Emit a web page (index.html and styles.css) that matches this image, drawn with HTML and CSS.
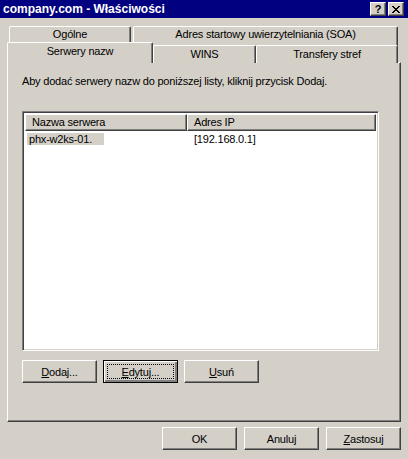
FILE: index.html
```html
<!DOCTYPE html>
<html lang="pl">
<head>
    <meta charset="UTF-8">
    <title>company.com - Właściwości</title>
    <link rel="stylesheet" href="styles.css">
</head>
<body>
<div class="window">

    <!-- Title bar -->
    <div class="titlebar">
        <span class="title">company.com - Właściwości</span>
        <div class="caption-buttons">
            <span class="cap-btn">?</span>
            <span class="cap-btn cap-close">
                <svg width="8" height="7" viewBox="0 0 8 7"><path d="M0 0h2v1h1v1h2v-1h1v-1h2v1h-1v1h-1v1h-1v1h1v1h1v1h1v1h-2v-1h-1v-1h-2v1h-1v1h-2v-1h1v-1h1v-1h1v-1h-1v-1h-1v-1h-1z" fill="#000"/></svg>
            </span>
        </div>
    </div>

    <!-- Tabs -->
    <div class="tabs">
        <div class="tab-row back">
            <div class="tab t-general">Ogólne</div>
            <div class="tab t-soa">Adres startowy uwierzytelniania (SOA)</div>
        </div>
        <div class="tab-row front">
            <div class="tab t-ns selected">Serwery nazw</div>
            <div class="tab t-wins">WINS</div>
            <div class="tab t-zone">Transfery stref</div>
        </div>
    </div>

    <!-- Tab page -->
    <div class="panel">
        <p class="hint">Aby dodać serwery nazw do poniższej listy, kliknij przycisk Dodaj.</p>

        <div class="listview">
            <div class="lv-header">
                <div class="lv-col c-name">Nazwa serwera</div>
                <div class="lv-col c-ip">Adres IP</div>
            </div>
            <div class="lv-row">
                <div class="lv-cell c-name"><span class="sel">phx-w2ks-01.</span></div>
                <div class="lv-cell c-ip">[192.168.0.1]</div>
            </div>
        </div>

        <div class="panel-buttons">
            <button class="btn"><u>D</u>odaj...</button>
            <button class="btn focused"><span class="focus-rect"><u>E</u>dytuj...</span></button>
            <button class="btn"><u>U</u>suń</button>
        </div>
    </div>

    <!-- Dialog buttons -->
    <div class="footer">
        <button class="btn">OK</button>
        <button class="btn">Anuluj</button>
        <button class="btn"><u>Z</u>astosuj</button>
    </div>

</div>
</body>
</html>
```

FILE: styles.css
```css
* {
    box-sizing: border-box;
}
body {
    margin: 0;
    background-color: #d4d0c8;
    font-family: "Liberation Sans", Arial, sans-serif;
    font-size: 11px;
    letter-spacing: -0.2px;
    color: #000;
}
.window {
    width: 408px;
    height: 459px;
    background-color: #d4d0c8;
    overflow: hidden;
}

/* title bar */
.titlebar {
    height: 18px;
    background-color: #000080;
    display: flex;
    align-items: center;
    justify-content: space-between;
    padding: 0 4px 0 3px;
}
.title {
    color: #fff;
    font-weight: bold;
    font-size: 12px;
    letter-spacing: 0;
}
.caption-buttons {
    display: flex;
    gap: 2px;
}
.cap-btn {
    width: 16px;
    height: 14px;
    background-color: #d4d0c8;
    border: 1px solid;
    border-color: #fff #404040 #404040 #fff;
    box-shadow: inset -1px -1px #808080;
    display: flex;
    align-items: center;
    justify-content: center;
    font-weight: bold;
    font-size: 11px;
    line-height: 1;
}

/* tabs */
.tabs {
    padding: 8px 0 0 7px;
}
.tab-row {
    display: flex;
}
.tab-row.back {
    padding-left: 2px;
    height: 17px;
    gap: 2px;
}
.tab-row.front {
    height: 20px;
    margin-top: -1px;
}
.tab {
    background-color: #d4d0c8;
    border-top: 1px solid #fff;
    border-left: 1px solid #fff;
    border-right: 1px solid #404040;
    box-shadow: inset -1px 0 #808080;
    border-top-left-radius: 2px;
    border-top-right-radius: 2px;
    text-align: center;
    line-height: 15px;
}
.tab-row.back .tab {
    height: 20px;
}
.tab-row.front .tab {
    margin-top: 3px;
    height: 18px;
    line-height: 16px;
}
.tab-row.front .tab.selected {
    margin-top: 0;
    height: 21px;
    line-height: 17px;
    position: relative;
    z-index: 1;
}
.t-general { width: 122px; }
.t-soa { width: 265px; }
.t-ns { width: 146px; }
.t-wins { width: 103px; }
.t-zone { width: 142px; }

/* tab page */
.panel {
    margin-left: 7px;
    width: 394px;
    height: 360px;
    border-top: 1px solid #fff;
    border-left: 1px solid #fff;
    border-right: 1px solid #404040;
    border-bottom: 1px solid #404040;
    box-shadow: inset -1px -1px #808080;
    padding: 11px 0 0 14px;
}
.hint {
    margin: 0;
    line-height: 15px;
}
.listview {
    margin-top: 22px;
    width: 357px;
    height: 240px;
    background-color: #fff;
    border: 1px solid;
    border-color: #808080 #fff #fff #808080;
    box-shadow: inset 1px 1px #404040, inset -1px -1px #d4d0c8;
    padding: 2px;
}
.lv-header {
    display: flex;
    height: 17px;
}
.lv-col {
    background-color: #d4d0c8;
    border: 1px solid;
    border-color: #fff #404040 #404040 #fff;
    box-shadow: inset -1px -1px #808080;
    line-height: 14px;
    padding-left: 6px;
}
.lv-col.c-name { width: 162px; }
.lv-col.c-ip { flex: 1; }
.lv-row {
    display: flex;
    height: 14px;
    line-height: 14px;
    margin-top: 1px;
}
.lv-cell.c-name {
    width: 162px;
    padding-left: 2px;
}
.lv-cell.c-ip {
    padding-left: 7px;
}
.sel {
    background-color: #d4d0c8;
    padding: 0 12px 0 2px;
}

.panel-buttons {
    display: flex;
    gap: 6px;
    margin-top: 9px;
}
.btn {
    width: 75px;
    height: 23px;
    background-color: #d4d0c8;
    border: 1px solid;
    border-color: #fff #404040 #404040 #fff;
    box-shadow: inset -1px -1px #808080;
    font-family: "Liberation Sans", Arial, sans-serif;
    font-size: 11px;
    letter-spacing: -0.2px;
    color: #000;
    padding: 0;
    display: flex;
    align-items: center;
    justify-content: center;
}
.btn.focused {
    border: 1px solid #000;
    box-shadow: inset 1px 1px #fff, inset -2px -2px #808080;
    padding: 3px;
}
.focus-rect {
    width: 100%;
    height: 100%;
    border: 1px dotted #000;
    display: flex;
    align-items: center;
    justify-content: center;
}

/* dialog buttons */
.footer {
    display: flex;
    justify-content: flex-end;
    gap: 7px;
    padding: 5px 7px 0 0;
}
```
